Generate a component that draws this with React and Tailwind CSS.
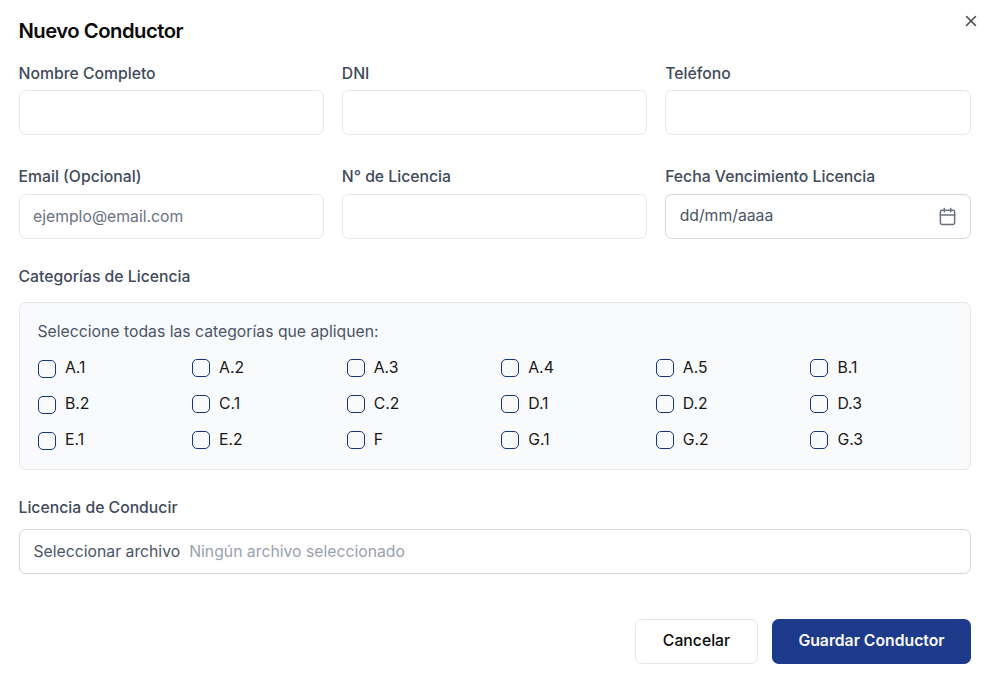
import React from "react";
import { Calendar, X } from "lucide-react";

const categories = ["A.1", "A.2", "A.3", "A.4", "A.5", "B.1", "B.2", "C.1", "C.2", "D.1", "D.2", "D.3", "E.1", "E.2", "F", "G.1", "G.2", "G.3"];

function Field({ label, children, tight }) {
  return (
    <div className={"flex flex-col " + (tight ? "gap-[7px] pt-px" : "gap-2")}>
      <label className="leading-[18px] font-medium text-[#3f4a5a]">{label}</label>
      {children}
    </div>
  );
}

function Box({ children, dark }) {
  return (
    <div className={"flex h-[45px] items-center rounded-[6.75px] border bg-white px-[13.5px] " + (dark ? "border-gray-300" : "border-[#e5e7eb]")}>
      {children}
    </div>
  );
}

export default function App() {
  return (
    <div className="h-[689px] w-[989px] overflow-hidden bg-white px-[18.5px] pt-[18px] font-['Inter',sans-serif] text-[15.75px]">
      <div className="flex justify-between">
        <h2 className="text-[20.25px] leading-[26px] font-semibold tracking-[-0.506px] text-[#0a0a0a]">Nuevo Conductor</h2>
        <X className="-mt-[6px] -mr-[9px] size-[18px] text-[#484848]" strokeWidth={2} />
      </div>

      <div className="mt-5 grid grid-cols-3 gap-x-[18px] gap-y-[33px]">
        <Field tight label="Nombre Completo"><Box /></Field>
        <Field tight label="DNI"><Box /></Field>
        <Field tight label="Teléfono"><Box /></Field>
        <Field label="Email (Opcional)"><Box><span className="text-gray-500">ejemplo@email.com</span></Box></Field>
        <Field label="N° de Licencia"><Box /></Field>
        <Field label="Fecha Vencimiento Licencia">
          <Box dark>
            <span className="flex-1 pb-0.5 text-gray-600">dd/mm/aaaa</span>
            <Calendar className="mb-px -mr-[0.5px] size-[19px] text-gray-500" strokeWidth={1.9} />
          </Box>
        </Field>
      </div>

      <h3 className="mt-[29px] leading-[18px] font-medium text-[#3f4a5a]">Categorías de Licencia</h3>
      <div className="mt-4 h-[168px] rounded-[6.75px] border border-[#e5e7eb] bg-[#f9fafc] px-[18px] pt-[19px]">
        <p className="leading-[20px] text-gray-600">Seleccione todas las categorías que apliquen:</p>
        <div className="mt-2 grid grid-cols-6 gap-x-[13.5px]">
          {categories.map((c, i) => (
            <div key={c} className="flex h-9 items-center gap-[9px]">
              <span className={"size-[18px] rounded-[5px] border border-[#17327f] " + (i % 6 === 0 ? "mt-0.5 mr-[0.5px]" : "")} />
              <span className="text-[#171717]">{c}</span>
            </div>
          ))}
        </div>
      </div>

      <h3 className="mt-[29px] leading-[18px] font-medium text-[#3f4a5a]">Licencia de Conducir</h3>
      <div className="mt-3 flex h-[45px] items-center gap-[9px] rounded-[6.75px] border border-gray-300 px-[14px]">
        <span className="text-gray-600">Seleccionar archivo</span>
        <span className="text-gray-400">Ningún archivo seleccionado</span>
      </div>

      <div className="mt-[45px] flex justify-end gap-[14px]">
        <button className="h-[45px] w-[123px] rounded-[6.75px] border border-[#e5e7eb] pb-px pl-px font-medium text-[#0a0a0a]">Cancelar</button>
        <button className="h-[45px] w-[199px] rounded-[6.75px] bg-[#1e3a8a] pb-px pl-px font-semibold text-[#fafafa]">Guardar Conductor</button>
      </div>
    </div>
  );
}
